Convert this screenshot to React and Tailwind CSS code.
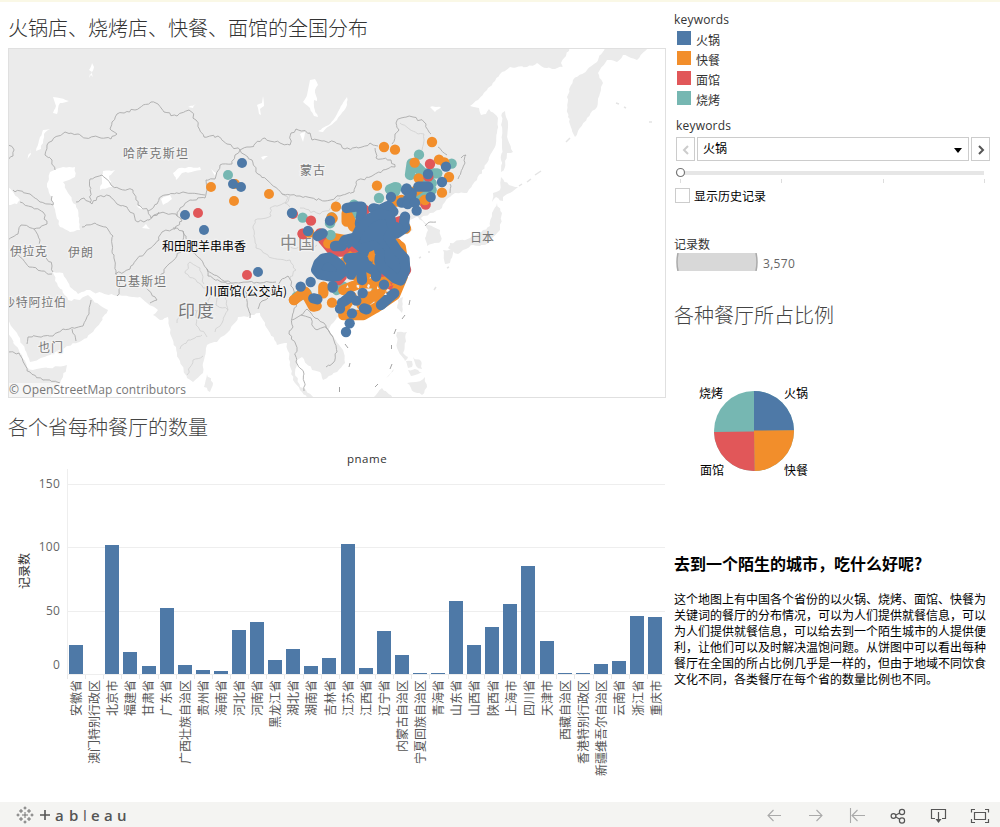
import React from "react";

const BLUE = "#4e79a7";
const ORANGE = "#f28e2b";
const RED = "#e15759";
const TEAL = "#76b7b2";

const provinces = [
  ["安徽省", 29], ["澳门特别行政区", 0], ["北京市", 129], ["福建省", 22], ["甘肃省", 8], ["广东省", 66],
  ["广西壮族自治区", 9], ["贵州省", 4], ["海南省", 3], ["河北省", 44], ["河南省", 52], ["黑龙江省", 14],
  ["湖北省", 25], ["湖南省", 8], ["吉林省", 16], ["江苏省", 130], ["江西省", 6], ["辽宁省", 43],
  ["内蒙古自治区", 19], ["宁夏回族自治区", 1], ["青海省", 1], ["山东省", 73], ["山西省", 29], ["陕西省", 47],
  ["上海市", 70], ["四川省", 108], ["天津市", 33], ["西藏自治区", 1], ["香港特别行政区", 1],
  ["新疆维吾尔自治区", 10], ["云南省", 13], ["浙江省", 58], ["重庆市", 57],
];

const legend = [
  ["火锅", "bg-[#4e79a7]"], ["快餐", "bg-[#f28e2b]"], ["面馆", "bg-[#e15759]"], ["烧烤", "bg-[#76b7b2]"],
];

// Subdivides every segment with a small repeatable offset so coasts and borders look natural.
function rough(points, amp = 1.6) {
  const p = points.trim().split(/\s+/).map((s) => s.split(",").map(Number));
  let seed = p[0][0] * 13 + p[0][1] * 7 + p.length;
  const rnd = () => {
    seed = (seed * 9301 + 49297) % 233280;
    return seed / 233280 - 0.5;
  };
  const out = [p[0].join(",")];
  for (let i = 1; i < p.length; i++) {
    const [x0, y0] = p[i - 1];
    const [x1, y1] = p[i];
    const n = Math.max(1, Math.round(Math.hypot(x1 - x0, y1 - y0) / 3));
    for (let k = 1; k < n; k++) {
      out.push(
        `${(x0 + ((x1 - x0) * k) / n + rnd() * amp).toFixed(1)},${(y0 + ((y1 - y0) * k) / n + rnd() * amp).toFixed(1)}`
      );
    }
    out.push(`${x1},${y1}`);
  }
  return out.join(" ");
}

const ocean =
  "570,48 566,56 561,63 563,67 555,69 547,68 537,63 527,67 510,67 502,72 495,81 487,90 478,100 470,106 479,108 481,115 486,114 489,109 498,118 497,133 495,147 487,163 477,180 467,193 455,193 445,202 442,208 430,213 421,218 428,225 440,230 441,241 427,246 425,238 428,230 424,223 418,217 408,221 413,230 397,240 410,263 408,277 398,297 380,311 363,318 350,320 337,317 328,330 334,338 343,350 345,363 332,375 323,380 320,372 312,370 302,357 297,360 295,373 300,387 315,398 307,398 302,392 293,380 290,362 287,343 277,345 270,333 263,320 260,313 248,317 238,317 230,330 217,342 207,345 204,360 203,373 193,382 187,378 177,353 170,333 168,317 160,320 153,315 158,310 147,303 140,297 117,296 93,292 90,290 78,294 70,287 63,273 53,272 57,283 68,300 80,300 88,295 93,300 108,310 100,323 87,338 53,353 30,362 25,350 17,333 8,320 8,333 20,353 27,367 33,370 67,365 63,377 50,398 666,398 666,48";

const lands = [
  "605,48 597,62 587,70 573,80 567,97 568,117 575,137 587,118 597,107 600,93 603,83 598,73 607,60 617,62 623,55 637,60 648,48",
  "502,113 505,111 508,127 508,140 513,152 507,153 505,167 501,172 502,143 502,113",
  "501,177 509,185 518,187 510,193 503,197 503,201 496,197 492,202 493,193 500,190 501,177",
  "497,203 502,213 500,230 493,237 485,245 473,245 463,250 458,254 448,248 450,243 470,238 483,230 490,226 492,213 497,203",
  "443,250 453,250 450,263 445,264 443,250",
  "398,300 403,297 402,313 397,308 398,300",
  "397,332 407,332 403,353 408,357 405,361 397,348 397,332",
  "406,361 412,361 412,367 408,368", "413,357 421,361 422,369 416,366", "408,370 418,370 422,373 411,376",
  "407,383 416,382 425,377 427,387 422,395 414,392 407,383",
  "373,398 382,388 393,398", "386,378 394,369 389,375",
  "207,374 213,383 210,392 204,387 207,374",
];

const lakes = [
  "50,172 63,167 75,167 75,177 63,182 68,193 78,210 80,230 70,232 60,227 52,200 47,187 50,172",
  "103,171 115,170 109,176 112,187 100,190 102,180 103,171",
  "173,173 179,168 200,167 201,170 182,173 176,180 173,173",
  "318,131 330,124 337,114 347,97 347,105 337,120 323,132 318,131",
  "8,187 20,200 17,204 8,205", "142,228 146,224 150,229",
  "89,78 92,72 89,70 92,63 94,67 92,72 93,77 90,74", "53,97 69,101 60,103 57,114 53,113 56,106",
  "26,161 31,149 31,154", "36,151 40,137 43,130 50,129 44,134 41,149",
  "188,107 196,104 193,108", "263,96 264,106 260,109 261,115 259,114 257,105 262,103",
  "310,80 315,79 318,85 315,90 317,101 314,100 314,107 318,117 314,116 310,108 303,102 307,95",
  "300,134 305,132 303,142", "261,157 268,156 263,160", "430,107 441,107 435,112",
  "211,169 216,173 215,176", "161,199 170,195 172,199 163,205", "136,205 147,209 139,208",
];

const borders = [
  "55,170 52,160 45,155 47,145 52,141 65,132 78,134 85,138 98,137 111,139 117,134 110,129 112,122 117,114 135,110 151,102 158,104 164,112 177,116 189,110 196,120 204,137 218,136 227,144 240,150 250,147 265,138 280,143 290,145 291,133 296,129 310,133 312,140 322,141 335,142 345,149 362,147 370,143 378,146",
  "240,150 235,155 232,164 220,165 215,179 206,180 207,190 205,198 190,200 180,208 177,216",
  "240,150 252,160 258,174 267,180 282,194 300,196 325,201 340,196 354,192 356,182 372,176 383,170 395,167 391,160 376,158 375,148",
  "392,144 395,134 399,130 396,123 401,118 413,117 424,122 431,134",
  "438,147 447,155", "461,158 466,155 465,163 458,179", "450,184 450,193",
  "90,203 90,179 102,175 111,185 120,189 133,190 138,205 148,211 157,204 162,196 183,192 205,195",
  "76,202 84,198 92,204 97,197 110,196 117,204 127,207 138,222 149,220 159,212",
  "148,211 151,218 160,213 176,214 182,221 175,229 162,232 155,244 145,253 137,259 130,269 115,274",
  "82,227 95,223 106,227 113,236 112,244 116,274 120,288 117,296",
  "13,190 30,194 40,202 53,205 52,196", "20,202 32,207 43,212 47,224 40,228 34,229 40,240 41,251 52,266 53,272",
  "8,240 18,234 21,225 34,229", "10,252 20,257 29,267 52,274",
  "173,228 183,231 190,250 198,257 207,269 220,278 233,283 248,282 260,283 276,282",
  "183,231 182,250 166,267 164,273 151,280 146,288 157,300 150,303",
  "207,269 208,276 221,282 234,285", "238,297 246,291 248,308 250,318", "258,309 262,301 268,298 274,291 281,280 288,276",
  "288,276 293,288 297,300 292,318 293,327 289,334 296,345 296,362 304,374 304,391",
  "292,320 301,315 311,318 315,329 326,327 333,337 337,352 333,363 326,367",
  "301,315 307,309 315,318 324,323 333,337", "27,344 28,337 53,336 63,329 83,326 89,314 91,300", "72,329 76,341",
  "8,352 19,353 25,365 30,372 43,380 60,383", "8,145 13,148 13,156 8,160", "425,226 430,222 436,222",
];

const innerBorders = [
  "190,262 185,273 197,282 211,292 208,305 197,311 196,325 207,337", "233,285 226,296 228,310 222,323 215,332",
  "211,292 224,291 238,297", "197,311 187,307 180,309 177,323", "180,349 188,340 195,338 202,335",
  "187,375 193,360 203,356", "190,262 200,268 204,284", "218,292 216,305 228,310",
  "290,196 286,203 270,208 271,216 255,220 253,228 256,248 272,258 290,260 296,270 290,280",
  "300,208 320,214 333,207 340,198", "400,123 408,128 418,134 424,134 422,150",
  "282,194 288,197 285,203 290,207", "290,247 305,249 317,245", "288,300 296,300 306,292",
];

// Clustered marks use a finer grid, three units to a pixel: dense runs first, then single marks on top.
const runs = [
  [TEAL, "M395 100L390 135M410 110L430 130L465 130M420 140L455 160M330 178L345 172M345 185L350 172M455 180L415 210M155 262L150 280M222 224L215 255M50 500L80 490M170 480L190 470M290 480L300 500M200 410L215 395"],
  [RED, "M70 312L68 311M120 310L130 330L160 365L200 365L225 362M245 235L255 240M300 295L370 270M350 340L378 420L350 460M175 450L185 440M300 440L335 465"],
  [ORANGE, "M155 262L158 265M145 340L165 325L195 330M200 275L200 250L220 290M375 290L378 296M350 215L365 210M403 185L425 170M435 210L430 215M300 310L340 335L362 350L370 400M368 440L345 495L285 535L250 555L190 555L195 530L215 500M270 370L275 420L240 445L215 430L190 400L220 375M42 510L75 485L100 530L110 528M130 470L130 490M190 480L240 460L290 460L340 450M250 500L320 500M245 525L300 480L320 455"],
];
const blueRuns =
  "M200 234L225 230L245 230L245 250L240 280L260 285M280 235L300 240L325 228L340 245L315 255M375 260L372 280L375 293L350 310L330 315M378 180L395 190L390 215L365 218M395 190L385 205M415 170L445 170M113 318L128 310M165 348L185 348L195 330L240 320M205 385L240 382L262 375L262 400M240 400L246 450M212 408L213 434M265 412L290 425L288 440M158 473L158 468M100 505L112 508M195 512L205 505M252 535L260 538M303 525L325 505L343 490";
const blueCore =
  "M243 290L270 265L300 250L330 258L335 285L355 295L330 312L325 322L340 344L352 362L374 385L376 420L362 452L345 445L325 428L305 412L298 395L300 368L282 346L260 352L240 355L215 345L230 315Z";

const overDots = [
  [TEAL, "417,74 515,101 472,130 297,204 68,263 152,315 345,172"],
  [ORANGE, "312,51 345,59 456,36 404,98 477,89 493,97 507,141 486,188 291,167 168,230 42,510 156,518 416,145"],
  [RED, "450,102 93,272 437,224 445,140 68,312"],
  [ORANGE, "435,210 88,308"],
];
const blueDots =
  "498,110 444,132 486,156 452,201 410,242 333,201 150,272 36,249 84,303 62,470 92,456 312,464 248,489 180,536 216,550 209,580 198,606 212,497 229,512 186,518 380,175 383,222 405,218";

const farDots = [
  [TEAL, 228, 175], [ORANGE, 211, 187], [ORANGE, 235, 184], [BLUE, 233, 184], [BLUE, 241, 187], [BLUE, 242, 163],
  [ORANGE, 269, 194], [ORANGE, 234, 201], [BLUE, 185, 215], [RED, 198, 213], [BLUE, 204, 230], [RED, 247, 275],
  [BLUE, 258, 272], [RED, 293, 214],
];

function Dots({ color, list }) {
  return list.split(" ").map((s) => {
    const [x, y] = s.split(",");
    return <circle key={s} cx={x} cy={y} r="15.500" fill={color} />;
  });
}

function MapText({ x, y, w, size = 12, color = "#777", halo = true, children }) {
  return (
    <text x={x} y={y} textLength={w} fontSize={size} fill={color} stroke={halo ? "#f2f2f2" : "none"} strokeWidth="2.5" paintOrder="stroke">
      {children}
    </text>
  );
}

function RestaurantMap() {
  return (
    <svg viewBox="8 48 658 350" className="block h-[350px] w-[658px] shrink-0">
      <rect x="8" y="48" width="658" height="350" fill="#ebebeb" />
      <polygon points={rough(ocean, 2)} fill="#fff" />
      {lands.map((d) => <polygon key={d} points={rough(d, 2)} fill="#ebebeb" />)}
      {lakes.map((d) => <polygon key={d} points={rough(d, 1.5)} fill="#fff" />)}
      <polygon points="570,48 605,48 597,56 590,62 582,65 573,74 562,68" fill="#fff" />
      <g fill="none" strokeLinejoin="round">
        {innerBorders.map((d) => <polyline key={d} points={rough(d, 2.4)} stroke="#cfcfcf" strokeWidth=".8" />)}
        {borders.map((d) => <polyline key={d} points={rough(d, 2.6)} stroke="#aaa" strokeWidth=".9" />)}
        <path d="M410 300l-1 5M405 315l-3 4M396 329l-2 5M391.500 345v4M392 364l-2 5M378 384l-3 3M345 344l3 4M350 363l-1 4M339.500 387v5" stroke="#999" strokeWidth=".9" />
        <path d="M519 186l3-2M527 182l4-3M535 175l6-4M566 142l4-4M447 268l2-1M434 290l2-3M616 103l3 1M624 107l2 1M649 122l3 0M428 252h2M419 258l2-1" stroke="#e4e4e4" strokeWidth="1.5" />
      </g>
      <g className="font-['Noto_Sans','Noto_Sans_CJK_SC',sans-serif]">
        <MapText x="123" y="158" w="65">哈萨克斯坦</MapText>
        <MapText x="300" y="175" w="25">蒙古</MapText>
        <MapText x="280" y="249" w="35" size="17" color="#888">中国</MapText>
        <MapText x="470" y="242" w="24" halo={false}>日本</MapText>
        <MapText x="10" y="256" w="37">伊拉克</MapText>
        <MapText x="68" y="257" w="25">伊朗</MapText>
        <MapText x="115" y="286" w="51">巴基斯坦</MapText>
        <MapText x="3" y="307" w="63">沙特阿拉伯</MapText>
        <MapText x="178" y="317" w="36" size="17">印度</MapText>
        <MapText x="38" y="352" w="25">也门</MapText>
      </g>
      {farDots.map(([c, x, y]) => <circle key={`${x}-${y}`} cx={x} cy={y} r="5" fill={c} />)}
      <g transform="translate(280 130) scale(.33333)" strokeLinecap="round" strokeLinejoin="round">
        {runs.map(([c, d]) => <path key={c} d={d} fill="none" stroke={c} strokeWidth="31" />)}
        {overDots.map(([c, list]) => <Dots key={list} color={c} list={list} />)}
        <path d={blueRuns} fill="none" stroke={BLUE} strokeWidth="31" />
        <path d={blueCore} fill={BLUE} stroke={BLUE} strokeWidth="30" />
        <path d="M108 420L115 400L130 385L148 382L165 392L180 405L190 425L175 438L150 440L120 434Z" fill={BLUE} stroke={BLUE} strokeWidth="30" />
        <Dots color={BLUE} list={blueDots} />
        <path d="M268 366l14-6 3 14-9 22-9-5-4-12z" fill={ORANGE} />
        <path d="M204 358l12-9 20 16-18 3z" fill={RED} />
        <path d="M230 464l8 2-1 9-7-3zM264 462l6 3-3 10-6-4zM203 465l-5 8h8zM318 487l-6 8h8zM292 468l5 8-6 2z" fill="#f3f3f3" />
        <path d="M330 457l8 2-4 7z" fill={RED} />
      </g>
      <g className="font-['Noto_Sans_CJK_SC',sans-serif]">
        <MapText x="162" y="251" w="84" color="#000">和田肥羊串串香</MapText>
        <MapText x="205" y="296" w="82" color="#000">川面馆(公交站)</MapText>
      </g>
      <rect x="8" y="383" width="180" height="14" fill="#fff" opacity=".55" />
      <text x="9" y="394" textLength="177" fontSize="12" fill="#777" className="font-['Open_Sans',sans-serif]">© OpenStreetMap contributors</text>
      <rect x="8.500" y="48.500" width="657" height="349" fill="none" stroke="#e0e0e0" />
    </svg>
  );
}

function BarChart() {
  return (
    <div className="flex h-[346px] flex-col">
      <div className="h-[25px] pl-[339px] pt-[8px] font-['Open_Sans',sans-serif] text-[11.5px] leading-[14px] tracking-[.5px] text-[#333]">pname</div>
      <div className="flex">
        <div className="flex h-[205px] w-[28px] items-center justify-center pl-[4px]">
          <span className="rotate-180 whitespace-nowrap text-[12px] leading-[14px] text-[#333] [text-orientation:sideways] [writing-mode:vertical-rl]">记录数</span>
        </div>
        <div className="flex h-[205px] w-[31px] flex-col items-end pr-[7px] pt-[8px] font-['Open_Sans',sans-serif] text-[12px] leading-[14px] tracking-[.2px] text-[#666]">
          <span className="h-[63px]">150</span>
          <span className="h-[64px]">100</span>
          <span className="h-[54px]">50</span>
          <span>0</span>
        </div>
        <div className="flex h-[206px] w-[598px] flex-col border-b border-l border-[#eee]">
          <div className="grid h-[205px] grid-cols-[repeat(33,minmax(0,1fr))] items-end bg-[linear-gradient(#eee,#eee),linear-gradient(#eee,#eee),linear-gradient(#eee,#eee)] bg-[length:100%_1px] bg-[position:0_15px,0_78px,0_142px] bg-no-repeat">
            {provinces.map(([name, h]) => (
              <div key={name} className="ml-[1.2px] w-[14px] bg-[#4e79a7]" style={{ height: h }} />
            ))}
          </div>
        </div>
      </div>
      <div className="ml-[59px] grid w-[598px] grid-cols-[repeat(33,minmax(0,1fr))] items-start">
        {provinces.map(([name]) => (
          <div key={name} className="flex justify-center border-l border-[#f1f1f1] pr-[1.5px] pt-[5px] [border-image:linear-gradient(#e8e8e8_5px,transparent_5px)_1]">
            <span className="rotate-180 whitespace-nowrap text-[12px] leading-[16px] text-[#555] [text-orientation:sideways] [writing-mode:vertical-rl]">{name}</span>
          </div>
        ))}
      </div>
    </div>
  );
}

function Filter() {
  return (
    <div className="flex flex-col">
      <div className="ml-[2px] flex h-[24px] gap-[2px]">
        <div className="flex w-[19px] items-center justify-center border border-[#ccc] pt-[2px]">
          <svg viewBox="0 0 8 10" className="h-[10px] w-[8px]"><path d="M6 1L2 5l4 4" fill="none" stroke="#ccc" strokeWidth="2" /></svg>
        </div>
        <div className="flex w-[272px] items-center justify-between border border-[#ccc] pl-[5px] pr-[6px] text-[12px] leading-[18px] text-black">
          <span className="pb-[2px]">火锅</span>
          <svg viewBox="0 0 8 5" className="mt-[2px] h-[5px] w-[8px]"><path d="M0 0h8L4 5z" /></svg>
        </div>
        <div className="flex w-[19px] items-center justify-center border border-[#ccc] pt-[2px]">
          <svg viewBox="0 0 8 10" className="h-[10px] w-[8px]"><path d="M2 1l4 4-4 4" fill="none" stroke="#555" strokeWidth="2" /></svg>
        </div>
      </div>
      <svg viewBox="0 0 326 27" className="block h-[27px] w-[326px]">
        <rect x="7" y="10" width="303" height="4" fill="#e6e6e6" />
        <circle cx="6.500" cy="11.500" r="4" fill="#fff" stroke="#777" strokeWidth="1.200" />
        <path d="M6.500 18v4M107.500 18v4M209.500 18v4M310.500 18v4" stroke="#ddd" />
      </svg>
      <div className="ml-px flex h-[15px] items-center gap-[4px]">
        <div className="size-[15px] border border-[#ccc]" />
        <span className="text-[12px] leading-[15px] text-black">显示历史记录</span>
      </div>
    </div>
  );
}

function Pie() {
  return (
    <svg viewBox="674 330 326 210" className="block h-[210px] w-[326px] font-['Noto_Sans_CJK_SC',sans-serif]">
      <circle cx="754" cy="431" r="40" fill={TEAL} />
      <path d="M754 431V391A40 40 0 0 1 794 430.500Z" fill={BLUE} />
      <path d="M754 430.500L794 430.200A40 40 0 0 1 754.500 471Z" fill={ORANGE} />
      <path d="M754 431.500L754.600 471A40 40 0 0 1 714 431.900Z" fill={RED} />
      <g fontSize="12" fill="#000">
        <text x="699" y="398">烧烤</text>
        <text x="784" y="398">火锅</text>
        <text x="700" y="475">面馆</text>
        <text x="784" y="475">快餐</text>
      </g>
    </svg>
  );
}

const sparks = [[0, 0, 3], [0, -7, 1.5], [0, 7, 1.5], [-7, 0, 1.5], [7, 0, 1.5], [-4, -4, 2], [4, -4, 2], [-4, 4, 2], [4, 4, 2]];

function Toolbar() {
  return (
    <footer className="flex h-[25px] items-center justify-between bg-[#f4f4f2] pl-[16px] pr-[10px]">
      <div className="flex items-center gap-[5px]">
        <svg viewBox="-9 -9 18 18" className="size-[18px]" fill="none" stroke="#666" strokeWidth=".9">
          {sparks.map(([x, y, r]) => <path key={`${x},${y}`} d={`M${x - r} ${y}h${r * 2}M${x} ${y - r}v${r * 2}`} />)}
        </svg>
        <div className="flex items-center font-['Open_Sans',sans-serif] text-[15px] font-semibold leading-[20px] text-[#555]">
          <svg viewBox="0 0 12 12" className="mr-[4px] h-[12px] w-[12px]"><path d="M1 6h10M6 1v10" stroke="#555" strokeWidth="1.6" /></svg>
          <span className="w-[14px]">a</span><span className="w-[14px]">b</span><span className="w-[8px] font-normal">l</span>
          <span className="w-[13px]">e</span><span className="w-[13px]">a</span><span>u</span>
        </div>
      </div>
      <svg viewBox="760 802 230 25" className="h-[25px] w-[230px]" fill="none">
        <g stroke="#aaa" strokeWidth="1.100">
          <path d="M781 815.500h-13M773.500 810l-5.500 5.500 5.500 5.500M809 815.500h13M816.500 810l5.500 5.500-5.500 5.500M865 815.500h-13M857.500 810l-5.500 5.500 5.500 5.500M850.500 808v15" />
        </g>
        <g stroke="#555" strokeWidth="1.200">
          <circle cx="893.500" cy="816" r="2.400" /><circle cx="902" cy="812" r="2.600" /><circle cx="902" cy="820.500" r="2.600" />
          <path d="M895.800 815l4-2M895.800 817l4 2.300" />
          <path d="M935 818.500h-3.500v-9h14v9H942M938.500 812v9" />
          <path d="M935.500 819h6l-3 4z" fill="#555" stroke="none" />
          <path d="M975 809.500h-3.500v3M985 809.500h3.500v3M971.500 819v3.500h3.500M988.500 819v3.500H985M974.500 812.500h11v7h-11z" />
        </g>
      </svg>
    </footer>
  );
}

export default function App() {
  return (
    <div className="flex h-[827px] w-[1000px] flex-col overflow-hidden bg-white font-['Noto_Sans_CJK_SC',sans-serif]">
      <div className="h-[2px] shrink-0 bg-[#faf8e6]" />
      <div className="flex h-[800px] shrink-0 pl-[8px]">
        <main className="flex w-[666px] flex-col">
          <h1 className="h-[46px] pt-[11px] text-[20px] font-light leading-[30px] text-[#333]">火锅店、烧烤店、快餐、面馆的全国分布</h1>
          <RestaurantMap />
          <h2 className="h-[46px] pt-[14px] text-[20px] font-extralight leading-[30px] text-[#444]">各个省每种餐厅的数量</h2>
          <BarChart />
        </main>
        <aside className="flex w-[326px] flex-col">
          <div className="h-[26px] pt-[10px] font-['Open_Sans',sans-serif] text-[12px] leading-[16px] tracking-[.2px] text-[#333]">keywords</div>
          <ul className="flex flex-col">
            {legend.map(([name, color]) => (
              <li key={name} className="flex h-[20px] items-start gap-[5px] pl-[3px] pt-[3px]">
                <span className={`size-[14px] ${color}`} />
                <span className="pt-[2px] text-[12px] leading-[14px] text-[#333]">{name}</span>
              </li>
            ))}
          </ul>
          <div className="h-[29px] pl-[2px] pt-[10px] font-['Open_Sans',sans-serif] text-[12px] leading-[16px] tracking-[.2px] text-[#333]">keywords</div>
          <Filter />
          <div className="mt-[32px] h-[18px] text-[12px] leading-[17px] text-[#333]">记录数</div>
          <div className="flex h-[18px] items-center gap-[5px] pl-[2px]">
            <svg viewBox="0 0 82 18" className="h-[18px] w-[82px]">
              <path d="M2 0h78q2 9 0 18H2Q0 9 2 0z" fill="#d8d8d8" />
              <path d="M2 0Q0 9 2 18M80 0q2 9 0 18" fill="none" stroke="#aaa" strokeWidth="1.500" />
            </svg>
            <span className="pt-[3px] font-['Open_Sans',sans-serif] text-[12px] leading-[16px] tracking-[.3px] text-[#666]">3,570</span>
          </div>
          <h2 className="h-[59px] pt-[29px] text-[20px] font-extralight leading-[30px] text-[#444]">各种餐厅所占比例</h2>
          <Pie />
          <h3 className="h-[51px] pt-[11px] text-[16px] font-bold leading-[24px] text-black">去到一个陌生的城市，吃什么好呢?</h3>
          <p className="whitespace-nowrap text-[12px] leading-[16px] text-black">
            这个地图上有中国各个省份的以火锅、烧烤、面馆、快餐为<br />
            关键词的餐厅的分布情况，可以为人们提供就餐信息，可以<br />
            为人们提供就餐信息，可以给去到一个陌生城市的人提供便<br />
            利，让他们可以及时解决温饱问题。从饼图中可以看出每种<br />
            餐厅在全国的所占比例几乎是一样的，但由于地域不同饮食<br />
            文化不同，各类餐厅在每个省的数量比例也不同。
          </p>
        </aside>
      </div>
      <Toolbar />
    </div>
  );
}
